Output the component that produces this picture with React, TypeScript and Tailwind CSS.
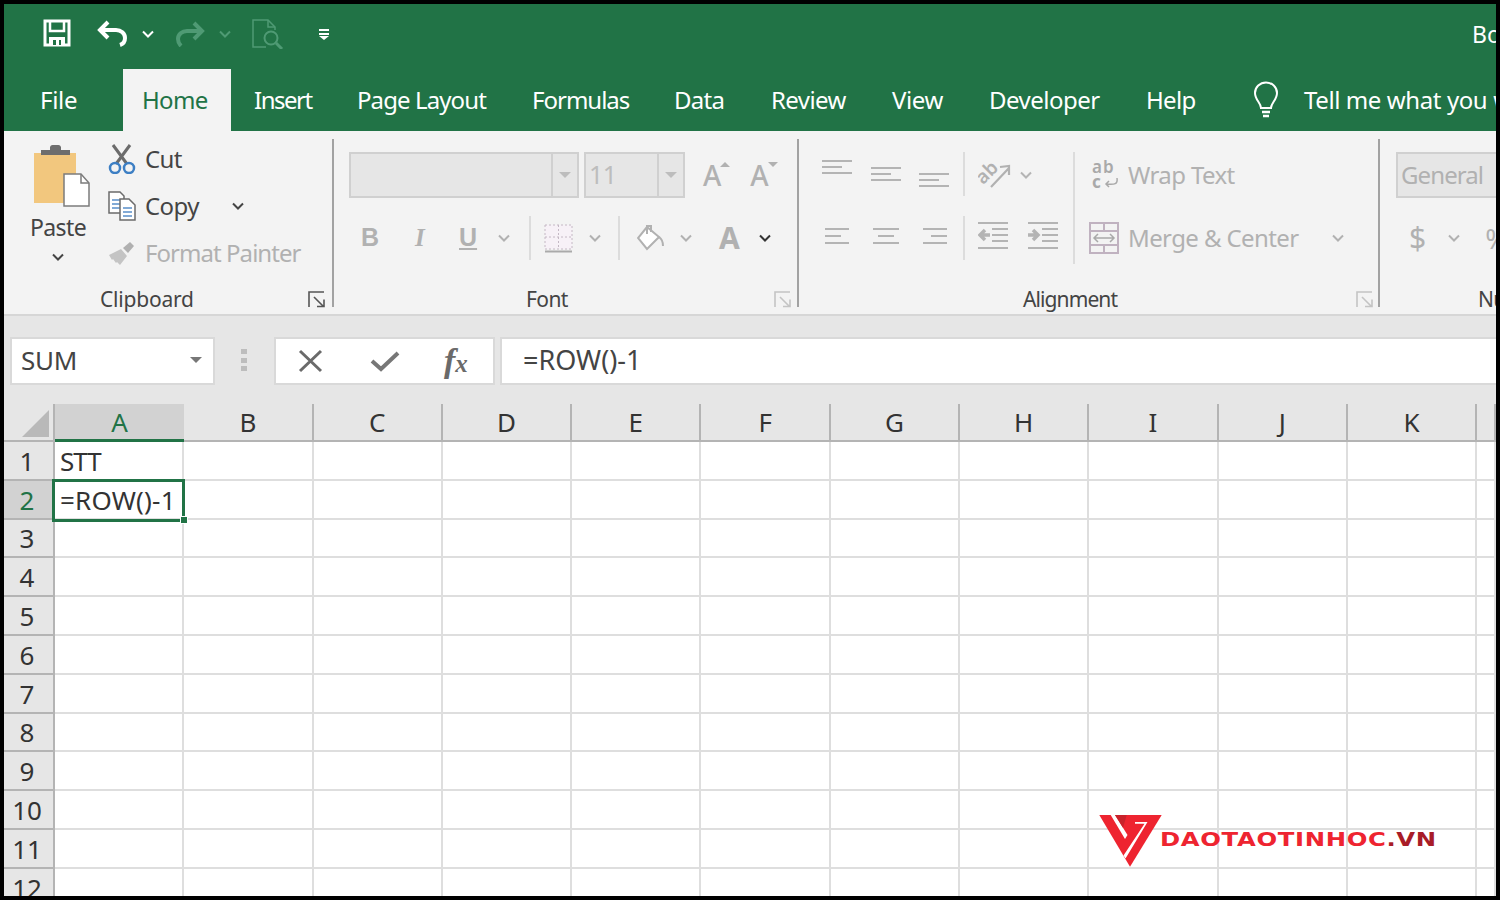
import type { ReactNode } from "react";

const FONT = { fontFamily: '"Noto Sans", "Open Sans", sans-serif' };
const columns = ["A", "B", "C", "D", "E", "F", "G", "H", "I", "J", "K", ""];
const rows = [1, 2, 3, 4, 5, 6, 7, 8, 9, 10, 11, 12];

const tabs = [
  { label: "File", w: "w-[105px] pl-[22px] tracking-[-0.3px]" },
  { label: "Home", w: "w-[108px] pl-[19px] bg-[#f3f3f3] text-[#217346]" },
  { label: "Insert", w: "w-[104px] pl-[23px] tracking-[-1.5px]" },
  { label: "Page Layout", w: "w-[175px] pl-[22px] tracking-[-0.9px]" },
  { label: "Formulas", w: "w-[142px] pl-[22px] tracking-[-1px]" },
  { label: "Data", w: "w-[97px] pl-[22px]" },
  { label: "Review", w: "w-[121px] pl-[22px] tracking-[-0.6px]" },
  { label: "View", w: "w-[97px] pl-[22px] tracking-[-0.4px]" },
  { label: "Developer", w: "w-[157px] pl-[22px] tracking-[-0.5px]" },
  { label: "Help", w: "w-[83px] pl-[22px] tracking-[-0.7px]" },
];

function Chevron({ className = "" }: { className?: string }) {
  return (
    <svg width="12" height="8" viewBox="0 0 12 8" className={`shrink-0 ${className}`}>
      <path d="M1 1.500 6 6.500 11 1.500" fill="none" stroke="currentColor" strokeWidth="2" />
    </svg>
  );
}

function Launcher({ className = "" }: { className?: string }) {
  return (
    <svg width="18" height="17" viewBox="0 0 18 17" className={className}>
      <path d="M16 1H1v15" fill="none" stroke="currentColor" strokeWidth="1.600" />
      <path d="M6 6l9 9M9 15.500h7v-7" fill="none" stroke="currentColor" strokeWidth="1.600" />
    </svg>
  );
}

function Separator() {
  return <div className="mt-[8px] h-[168px] w-[2px] shrink-0 bg-[#a2a2a2]" />;
}

function SmallSep({ className = "" }: { className?: string }) {
  return <div className={`h-[44px] w-[2px] shrink-0 bg-[#dcdcdc] ${className}`} />;
}

function Lines({ widths, w = 30, align = "left", gap = 7 }: { widths: number[]; w?: number; align?: string; gap?: number }) {
  return (
    <svg width={w} height={(widths.length - 1) * gap + 2} viewBox={`0 0 ${w} ${(widths.length - 1) * gap + 2}`} className="text-[#b4b4b4]">
      {widths.map((lw, i) => {
        const x = align === "left" ? 0 : align === "center" ? (w - lw) / 2 : w - lw;
        return <rect key={i} x={x} y={i * gap} width={lw} height="2" fill="currentColor" />;
      })}
    </svg>
  );
}

function Group({ className, label, labelClass, launcher, children }: { className: string; label: string; labelClass: string; launcher?: string; children: ReactNode }) {
  return (
    <section className={`relative h-[185px] shrink-0 ${className}`}>
      {children}
      <div className={`absolute top-[154px] text-[21px] leading-[28px] text-[#444] ${labelClass}`}>{label}</div>
      {launcher && <Launcher className={`absolute top-[160px] ${launcher}`} />}
    </section>
  );
}

function ComboBox({ className, text, caret }: { className: string; text?: string; caret?: boolean }) {
  return (
    <div className={`flex h-[46px] items-center border-2 border-[#d0d0d0] bg-[#e6e6e6] text-[25px] text-[#bdbdbd] ${className}`}>
      <span className="flex-1 pl-[3px] tracking-[-0.5px]">{text}</span>
      {caret && (
        <span className="flex h-full w-[26px] items-center justify-center border-l-2 border-[#d0d0d0]">
          <span className="h-0 w-0 border-x-[6px] border-t-[6px] border-x-transparent border-t-[#bdbdbd]" />
        </span>
      )}
    </div>
  );
}

function Logo() {
  return (
    <div className="absolute left-[1094px] top-[409px] flex h-[56px] items-start">
      <svg width="66" height="56" viewBox="0 0 66 56" className="shrink-0">
        <path d="M1.300 2H63.700L32 53.700z" fill="#ee2430" />
        <path d="M12.700 2H17L29.500 22 27 26z" fill="#fff" />
        <path d="M17 2H28.700L25 14.700z" fill="#c9222b" />
        <path d="M25.500 42.500 46.500 10.800H37V9H49.500L27.500 45.500z" fill="#fff" />
      </svg>
      <span
        className="ml-[-4px] mt-[14px] origin-left scale-x-[1.28] whitespace-nowrap text-[19px] font-bold leading-[24px] tracking-[0.5px] text-[#ee2430]"
        style={{ fontFamily: '"DejaVu Sans", sans-serif' }}
      >
        DAOTAOTINHOC<span className="text-[#a81c28]">.VN</span>
      </span>
    </div>
  );
}

export default function App() {
  return (
    <div className="h-[900px] w-[1500px] overflow-hidden border-4 border-black bg-white" style={FONT}>
      {/* title bar */}
      <header className="flex h-[65px] items-center bg-[#217346] pl-[39px] text-white">
        <svg width="28" height="28" viewBox="0 0 28 28" className="mb-[7px]">
          <path d="M2 2h24v24H2z" fill="none" stroke="#fff" strokeWidth="3" />
          <path d="M7 3v9h14V3" fill="none" stroke="#fff" strokeWidth="2.500" />
          <path d="M6 18h16v8H6z" fill="#fff" />
          <path d="M10 21h3v5h-3zM16 21h2v5h-2z" fill="#217346" />
        </svg>
        <svg width="32" height="28" viewBox="0 0 32 28" className="mb-[6px] ml-[26px]">
          <path d="M11 2 3 10l8 8" fill="none" stroke="#fff" strokeWidth="4" />
          <path d="M4 10h15a9 8 0 0 1 9 8c0 4-2 6-5 7" fill="none" stroke="#fff" strokeWidth="4" />
        </svg>
        <Chevron className="mb-[6px] ml-[13px] text-white" />
        <svg width="30" height="26" viewBox="0 0 30 26" className="mb-[6px] ml-[21px]">
          <path d="M19 2l8 8-8 8" fill="none" stroke="#4f9a74" strokeWidth="4" />
          <path d="M26 10H12a9 8 0 0 0-9 8c0 3 1 5 3 7" fill="none" stroke="#4f9a74" strokeWidth="4" />
        </svg>
        <Chevron className="mb-[6px] ml-[14px] text-[#4f9a74]" />
        <svg width="32" height="30" viewBox="0 0 32 30" className="mb-[6px] ml-[21px]">
          <path d="M14 28H1V1h15l7 7v3" fill="none" stroke="#4f9a74" strokeWidth="1.500" />
          <path d="M16 1v7h7" fill="none" stroke="#4f9a74" strokeWidth="1.500" />
          <circle cx="19" cy="19" r="6.500" fill="none" stroke="#4f9a74" strokeWidth="2" />
          <path d="M24 24l6 6" stroke="#4f9a74" strokeWidth="3" />
        </svg>
        <svg width="12" height="12" viewBox="0 0 12 12" className="mb-[5px] ml-[34px]">
          <path d="M1 1h10v2H1zM1 5h10v2H1zM1 8h10l-5 4z" fill="#fff" />
        </svg>
        <span className="mb-[4px] ml-auto w-[24px] overflow-hidden text-[23px] whitespace-nowrap">Book1</span>
      </header>

      {/* tabs */}
      <nav className="flex h-[62px] items-stretch overflow-hidden bg-[#217346] pl-[14px] text-[24px] tracking-[-0.7px] text-white">
        {tabs.map((tab) => (
          <div key={tab.label} className={`flex shrink-0 items-center ${tab.w}`}>
            {tab.label}
          </div>
        ))}
        <div className="flex items-center">
          <svg width="28" height="38" viewBox="0 0 28 38" className="ml-[45px] shrink-0">
            <path d="M9 27c0-5-6-8-6-15a11 10.500 0 0 1 22 0c0 7-6 10-6 15z" fill="none" stroke="#fff" strokeWidth="2" />
            <path d="M10 31h8M11 35h6" stroke="#fff" strokeWidth="2.500" />
          </svg>
          <span className="ml-[24px] whitespace-nowrap tracking-[-0.4px]">Tell me what you want</span>
        </div>
      </nav>

      {/* ribbon */}
      <div className="flex h-[185px] overflow-hidden border-b-2 border-[#d6d6d6] bg-[#f3f3f3] text-[#444]">
        <Group className="w-[328px]" label="Clipboard" labelClass="left-[96px] tracking-[-0.2px]" launcher="left-[304px] text-[#555]">
          <div className="flex h-[152px]">
            <div className="ml-[26px] mt-[14px] flex w-[56px] flex-col items-center">
              <svg width="58" height="62" viewBox="0 0 58 62" className="ml-[6px] shrink-0">
                <path d="M2 8h42v50H2z" fill="#f2c77e" />
                <path d="M9 10V5h9V2a3 3 0 0 1 3-2h5a3 3 0 0 1 3 2v3h9v5z" fill="#6d6d6d" />
                <path d="M32 29h17l8 9v23H32z" fill="#fff" stroke="#7c7c7c" strokeWidth="1.500" />
                <path d="M49 29v9h8" fill="none" stroke="#7c7c7c" strokeWidth="1.500" />
              </svg>
              <span className="mt-[5px] text-[23px] leading-[30px] tracking-[-0.6px]">Paste</span>
              <Chevron className="mt-[11px] text-[#444]" />
            </div>
            <div className="ml-[22px] mt-[4px] flex flex-col">
              <div className="flex h-[47px] items-center">
                <svg width="28" height="30" viewBox="0 0 28 30">
                  <path d="M5 1l14 19M22 1 8 20" stroke="#6b6b6b" strokeWidth="3" />
                  <circle cx="7" cy="24" r="5" fill="none" stroke="#3d7fc4" strokeWidth="2.500" />
                  <circle cx="21" cy="24" r="5" fill="none" stroke="#3d7fc4" strokeWidth="2.500" />
                </svg>
                <span className="ml-[9px] text-[24px] tracking-[-0.6px]">Cut</span>
              </div>
              <div className="flex h-[47px] items-center">
                <svg width="28" height="30" viewBox="0 0 28 30">
                  <path d="M1 1h11l4 4v17H1z" fill="#fff" stroke="#6b6b6b" strokeWidth="1.500" />
                  <path d="M4 9h8M4 13h8M4 17h8" stroke="#5a8fc9" strokeWidth="1.500" />
                  <path d="M12 8h9l6 6v15H12z" fill="#fff" stroke="#6b6b6b" strokeWidth="1.500" />
                  <path d="M15 17h9M15 21h9M15 25h9" stroke="#5a8fc9" strokeWidth="1.500" />
                </svg>
                <span className="ml-[9px] text-[24px] tracking-[-0.6px]">Copy</span>
                <Chevron className="ml-[33px] text-[#444]" />
              </div>
              <div className="flex h-[47px] items-center">
                <svg width="28" height="26" viewBox="0 0 28 26">
                  <path d="M1 15l12-6 6 7-7 9-3-3-1 1-3-4-1 1z" fill="#c4c4c4" />
                  <path d="M15 8l7-6 4 4-6 7z" fill="#b0b0b0" />
                </svg>
                <span className="ml-[9px] whitespace-nowrap text-[24px] tracking-[-0.95px] text-[#b1b1b1]">Format Painter</span>
              </div>
            </div>
          </div>
        </Group>
        <Separator />

        <Group className="w-[463px]" label="Font" labelClass="left-[192px] tracking-[-0.6px]" launcher="left-[440px] text-[#c4c4c4]">
          <div className="ml-[15px] flex pt-[21px]">
            <ComboBox className="w-[230px]" caret />
            <ComboBox className="ml-[5px] w-[101px]" text="11" caret />
            <span className="relative ml-[18px] mt-[2px] text-[28px] font-medium leading-[42px] text-[#b1b1b1]">
              A<span className="absolute right-[-9px] top-[8px] h-0 w-0 border-x-[5px] border-b-[5px] border-x-transparent border-b-[#b1b1b1]" />
            </span>
            <span className="relative ml-[29px] mt-[2px] text-[28px] font-medium leading-[42px] text-[#b1b1b1]">
              A<span className="absolute right-[-9px] top-[8px] h-0 w-0 border-x-[5px] border-t-[5px] border-x-transparent border-t-[#b1b1b1]" />
            </span>
          </div>
          <div className="ml-[27px] mt-[18px] flex h-[44px] items-center text-[#b1b1b1]">
            <span className="w-[54px] text-[25px] font-bold" style={{ fontFamily: '"Liberation Sans", sans-serif' }}>B</span>
            <span className="w-[44px] text-[25px] font-bold italic" style={{ fontFamily: '"Liberation Serif", serif' }}>I</span>
            <span className="w-[31px] text-[25px] font-bold underline" style={{ fontFamily: '"Liberation Sans", sans-serif' }}>U</span>
            <Chevron className="ml-[8px]" />
            <SmallSep className="ml-[19px]" />
            <svg width="29" height="29" viewBox="0 0 29 29" className="ml-[13px]">
              <rect x="1" y="1" width="27" height="24" fill="#f7f1f7" stroke="#c4b8c4" strokeDasharray="2 2" />
              <path d="M14.500 1v24M1 13h27" stroke="#c4b8c4" strokeDasharray="2 2" />
              <path d="M1 27.500h27" stroke="#aaa" strokeWidth="2" />
            </svg>
            <Chevron className="ml-[16px]" />
            <SmallSep className="ml-[17px]" />
            <svg width="28" height="28" viewBox="0 0 28 28" className="ml-[17px]">
              <path d="M10 3 1 14l9 11 12-12z" fill="#fff" stroke="#b1b1b1" strokeWidth="2" />
              <path d="M10 10V2h4v6M22 13c3 2 4 5 4 9" fill="none" stroke="#b1b1b1" strokeWidth="2" />
            </svg>
            <Chevron className="ml-[15px]" />
            <span className="ml-[27px] text-[30px] font-bold leading-[36px] text-[#b1b1b1]">A</span>
            <Chevron className="ml-[19px] text-[#333]" />
          </div>
        </Group>
        <Separator />

        <Group className="w-[579px]" label="Alignment" labelClass="left-[224px] tracking-[-0.9px]" launcher="left-[557px] text-[#c4c4c4]">
          <div className="flex h-[152px] items-start pt-[21px]">
            <div className="ml-[23px] flex flex-col">
              <div className="flex h-[46px] w-[127px] justify-between">
                <div className="mt-[8px]"><Lines widths={[30, 20, 30]} gap={6} /></div>
                <div className="mt-[15px]"><Lines widths={[30, 20, 30]} gap={6} /></div>
                <div className="mt-[21px]"><Lines widths={[30, 20, 30]} gap={6} /></div>
              </div>
              <div className="ml-[3px] mt-[30px] flex w-[122px] justify-between">
                <Lines widths={[24, 16, 24]} w={24} />
                <Lines widths={[26, 16, 26]} w={26} align="center" />
                <Lines widths={[24, 16, 24]} w={24} align="right" />
              </div>
            </div>
            <div className="ml-[14px] flex flex-col">
              <SmallSep />
              <SmallSep className="mt-[20px]" />
            </div>
            <div className="ml-[13px] flex w-[95px] flex-col">
              <div className="flex h-[46px] items-center">
                <svg width="34" height="30" viewBox="0 0 34 30" className="shrink-0">
                  <text x="0" y="19" fontSize="19" fontWeight="600" fill="#b1b1b1" transform="rotate(-45 10 16)" style={FONT}>ab</text>
                  <path d="M13 27 31 8M22 7l9-1 0 9" fill="none" stroke="#b1b1b1" strokeWidth="2.200" />
                </svg>
                <Chevron className="ml-[8px] text-[#b4b4b4]" />
              </div>
              <div className="mt-[24px] flex justify-between pr-[15px]">
                <svg width="30" height="27" viewBox="0 0 30 27">
                  <path d="M0 1h30M14 7h16M14 13h16M14 19h16M0 26h30" stroke="#b4b4b4" strokeWidth="2" />
                  <path d="M12 13H2m5-5-5 5 5 5" fill="none" stroke="#b4b4b4" strokeWidth="3.500" />
                </svg>
                <svg width="30" height="27" viewBox="0 0 30 27">
                  <path d="M0 1h30M14 7h16M14 13h16M14 19h16M0 26h30" stroke="#b4b4b4" strokeWidth="2" />
                  <path d="M0 13h10m-5-5 5 5-5 5" fill="none" stroke="#b4b4b4" strokeWidth="3.500" />
                </svg>
              </div>
            </div>
            <div className="h-[112px] w-[2px] shrink-0 bg-[#dcdcdc]" />
            <div className="ml-[14px] flex flex-col text-[24px] tracking-[-0.6px] text-[#b1b1b1]">
              <div className="flex h-[46px] items-center pl-[3px]">
                <svg width="27" height="30" viewBox="0 0 27 30" className="shrink-0">
                  <text x="0" y="13" fontSize="17" fontWeight="600" letterSpacing="1" fill="#a9a9a9" style={FONT}>ab</text>
                  <text x="0" y="28" fontSize="17" fontWeight="bold" fill="#a9a9a9" style={FONT}>c</text>
                  <path d="M25 18c1 6-2 7-11 6m3-3-3 3 3 3" fill="none" stroke="#a9a9a9" strokeWidth="1.500" />
                </svg>
                <span className="ml-[9px] whitespace-nowrap">Wrap Text</span>
              </div>
              <div className="mt-[17px] flex h-[46px] items-center">
                <svg width="30" height="32" viewBox="0 0 30 32" className="shrink-0">
                  <path d="M1 1h28v30H1zM1 9h28M1 23h28M15 1v8M15 23v8" fill="none" stroke="#c0b2c0" strokeWidth="2" />
                  <path d="M5 16h20M9 12l-4 4 4 4M21 12l4 4-4 4" fill="none" stroke="#a9a9a9" strokeWidth="1.500" />
                </svg>
                <span className="ml-[9px] whitespace-nowrap">Merge &amp; Center</span>
                <Chevron className="ml-[33px]" />
              </div>
            </div>
          </div>
        </Group>
        <Separator />

        <Group className="w-[117px]" label="Number" labelClass="left-[98px] tracking-[-0.6px]">
          <div className="ml-[16px] w-[130px] pt-[21px]">
            <div className="flex h-[46px] w-[120px] items-center border-2 border-[#d0d0d0] bg-[#e6e6e6] pl-[3px] text-[24px] tracking-[-0.9px] text-[#b1b1b1]">General</div>
            <div className="mt-[18px] flex h-[44px] items-center text-[#b1b1b1]">
              <span className="ml-[13px] text-[30px] leading-[36px]">$</span>
              <Chevron className="ml-[22px]" />
              <span className="ml-[25px] text-[28px]">%</span>
            </div>
          </div>
        </Group>
      </div>

      {/* formula bar */}
      <div className="flex h-[88px] bg-[#e6e6e6] pl-[6px] pt-[21px]">
        <div className="flex h-[48px] w-[205px] items-center border-2 border-[#d9d9d9] bg-white pb-[2px] pl-[9px] pr-[11px] text-[26px] tracking-[-0.3px] text-[#444]">
          <span className="flex-1">SUM</span>
          <span className="h-0 w-0 border-x-[6px] border-t-[6px] border-x-transparent border-t-[#777]" />
        </div>
        <div className="ml-[26px] mt-[12px] flex h-[22px] w-[6px] flex-col justify-between">
          <span className="h-[5px] w-[6px] bg-[#bdbdbd]" />
          <span className="h-[5px] w-[6px] bg-[#bdbdbd]" />
          <span className="h-[5px] w-[6px] bg-[#bdbdbd]" />
        </div>
        <div className="ml-[27px] flex h-[48px] w-[221px] items-center border-2 border-[#d9d9d9] bg-white pl-[22px]">
          <svg width="26" height="24" viewBox="0 0 26 24">
            <path d="M2 2l21 20M23 2 2 22" stroke="#6a6a6a" strokeWidth="3" />
          </svg>
          <svg width="32" height="24" viewBox="0 0 32 24" className="ml-[45px]">
            <path d="M3 12l9 8L29 4" fill="none" stroke="#777" strokeWidth="4" />
          </svg>
          <span className="ml-[43px] flex items-baseline font-bold italic leading-none text-[#6a6a6a]" style={{ fontFamily: '"Liberation Serif", serif' }}>
            <span className="text-[34px]">f</span>
            <span className="text-[25px]">x</span>
          </span>
        </div>
        <div className="ml-[5px] flex h-[48px] flex-1 items-center border-y-2 border-l-2 border-[#d9d9d9] bg-white pb-[2px] pl-[21px] text-[27px] text-[#444]">
          =ROW()-1
        </div>
      </div>

      {/* sheet */}
      <div className="relative grid grid-cols-[51px_repeat(11,129.3px)_1fr] grid-rows-[38px] auto-rows-[38.8px] text-[26px] leading-none text-[#333]">
        <div className="flex items-end justify-end border-b-2 border-r-2 border-[#b4b4b4] bg-[#e6e6e6] pb-[3px] pr-[3px]">
          <svg width="28" height="27" viewBox="0 0 28 27">
            <path d="M27 0v27H0z" fill="#b9b9b9" />
          </svg>
        </div>
        {columns.map((col) =>
          col === "A" ? (
            <div key="head-a" className="flex items-center justify-center border-b-[3px] border-[#217346] bg-[#d2d2d2] text-[#217346]">
              A
            </div>
          ) : (
            <div key={`head-${col}`} className="flex items-center justify-center border-b-2 border-r-2 border-[#b4b4b4] bg-[#e6e6e6]">
              {col}
            </div>
          ),
        )}
        {rows.map((row) => (
          <div key={row} className="contents">
            <div
              className={`flex items-center justify-center border-b-2 border-r-2 border-[#b4b4b4] pt-[1px] pr-[3px] ${
                row === 2 ? "bg-[#d2d2d2] text-[#217346]" : "bg-[#e6e6e6]"
              }`}
            >
              {row}
            </div>
            {columns.map((col) => (
              <div key={col + row} className="relative flex items-center border-b-2 border-r-2 border-[#dedede] bg-white pl-[5px] pt-[1px]">
                {col === "A" && row === 1 && <span className="tracking-[-1px]">STT</span>}
                {col === "A" && row === 2 && (
                  <>
                    <span className="relative z-20 tracking-[0.2px]">=ROW()-1</span>
                    <div className="absolute bottom-[-4px] left-[-3px] right-[-3px] top-[-2px] z-10 border-[3px] border-[#217346]" />
                    <div className="absolute bottom-[-6px] right-[-6px] z-10 h-[8px] w-[8px] border border-white bg-[#217346]" />
                  </>
                )}
              </div>
            ))}
          </div>
        ))}
        <Logo />
      </div>
    </div>
  );
}
